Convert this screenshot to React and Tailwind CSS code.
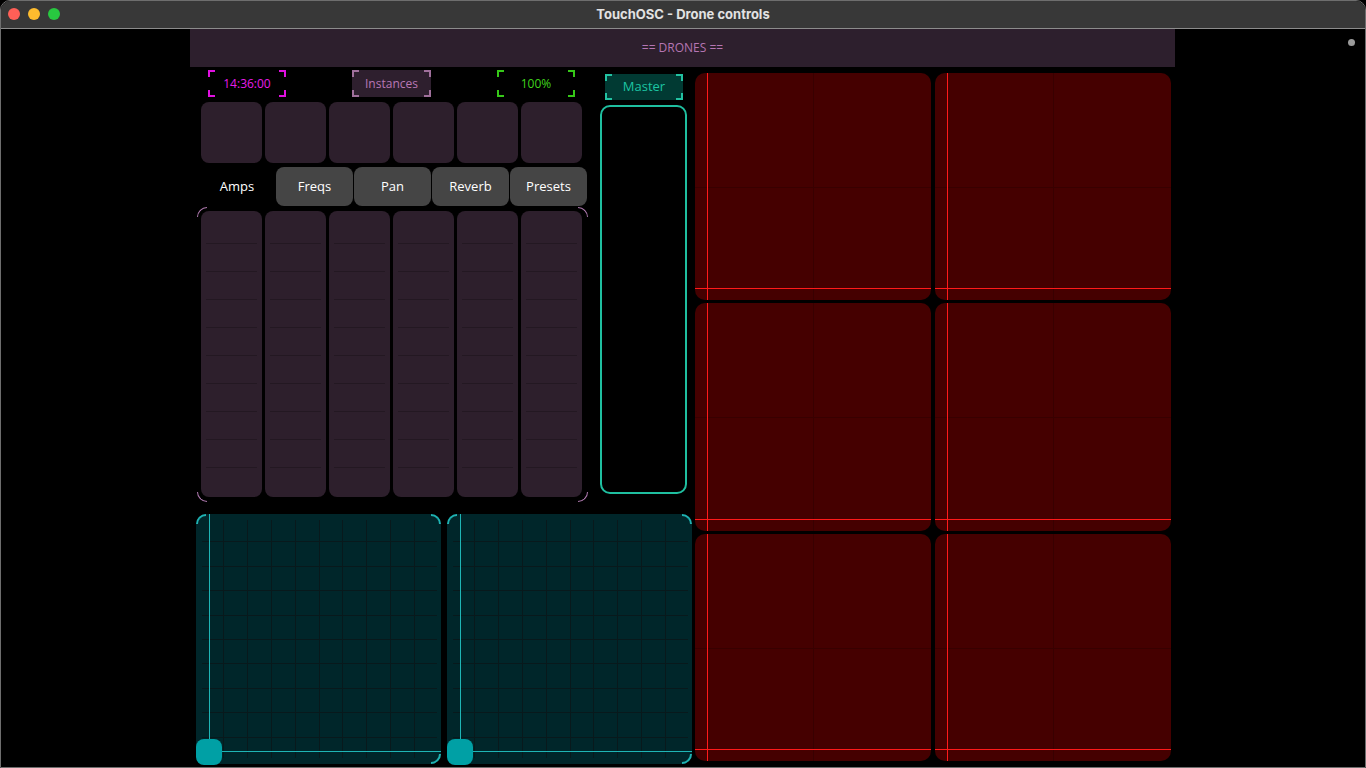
import React from 'react'

const cornerPos = [
  'left-0 top-0 border-l-2 border-t-2',
  'right-0 top-0 border-r-2 border-t-2',
  'left-0 bottom-0 border-l-2 border-b-2',
  'right-0 bottom-0 border-r-2 border-b-2',
]

function BracketBox({ width, text, textCls, lineCls, bgCls = '' }) {
  return (
    <div className={`relative h-full flex items-center justify-center ${width} ${bgCls}`}>
      {cornerPos.map((p, i) => (
        <span key={i} className={`absolute w-[7px] h-[7px] ${p} ${lineCls}`} />
      ))}
      <span className={`text-[12px] ${textCls}`}>{text}</span>
    </div>
  )
}

function Arc({ pos, cls }) {
  return <span className={`absolute w-[10px] h-[10px] ${pos} ${cls}`} />
}

function Fader() {
  const ticks = [32, 60, 88, 116, 144, 172, 200, 228, 256]
  return (
    <div className="relative w-[61px] h-full rounded-[8px] bg-[#2d1f2c]">
      {ticks.map(t => (
        <div key={t} className="absolute left-[5px] right-[5px] h-px bg-[#231822]" style={{ top: t }} />
      ))}
    </div>
  )
}

function TealPad() {
  const xs = [], ys = []
  for (let k = 1; k < 10; k++) {
    xs.push(3 + k * 23.9)
    ys.push(3 + k * 24.4)
  }
  return (
    <div className="relative w-[245px] h-[250px] rounded-[10px] bg-[#00262a]">
      <svg className="absolute inset-0" width="245" height="250">
        {xs.map(x => <line key={'x' + x} x1={Math.round(x) + 0.5} y1="6" x2={Math.round(x) + 0.5} y2="244" stroke="#08191c" strokeWidth="1" />)}
        {ys.map(y => <line key={'y' + y} x1="6" y1={Math.round(y) + 0.5} x2="241" y2={Math.round(y) + 0.5} stroke="#08191c" strokeWidth="1" />)}
      </svg>
      <Arc pos="left-0 top-0 border-l-2 border-t-2 rounded-tl-full" cls="border-[#1fb2b2]" />
      <Arc pos="right-0 top-0 border-r-2 border-t-2 rounded-tr-full" cls="border-[#1fb2b2]" />
      <Arc pos="right-0 bottom-0 border-r-2 border-b-2 rounded-br-full" cls="border-[#1fb2b2]" />
      <div className="absolute left-[13px] top-0 bottom-[14px] w-px bg-[#1fb5b5]" />
      <div className="absolute left-[20px] right-0 bottom-[12px] h-px bg-[#1fb5b5]" />
      <div className="absolute left-0 bottom-[-1px] w-[26px] h-[26px] rounded-[8px] bg-[#00a0a5]" />
    </div>
  )
}

function RedPad() {
  return (
    <div className="relative rounded-[10px] bg-[#450000] overflow-hidden">
      <div className="absolute left-1/2 top-0 bottom-0 w-px bg-[#380000]" />
      <div className="absolute top-1/2 left-0 right-0 h-px bg-[#380000]" />
      <div className="absolute left-[12px] top-0 bottom-0 w-px bg-[#ff1a1a]" />
      <div className="absolute bottom-[11px] left-0 right-0 h-px bg-[#ff1a1a]" />
    </div>
  )
}

export default function App() {
  const tabs = ['Freqs', 'Pan', 'Reverb', 'Presets']
  return (
    <div className="w-[1366px] h-[768px] bg-black overflow-hidden font-['Open_Sans',sans-serif]">
      <div className="h-full flex flex-col rounded-t-[10px] border border-[#6e6e6e] overflow-hidden bg-black">
        {/* title bar */}
        <div className="relative h-[28px] shrink-0 bg-[#383838] border-b border-[#8c8c8c] flex items-center justify-center">
          <div className="absolute left-[7px] top-[7px] flex gap-[8px]">
            <span className="w-[12px] h-[12px] rounded-full bg-[#ff5f57]" />
            <span className="w-[12px] h-[12px] rounded-full bg-[#febc2e]" />
            <span className="w-[12px] h-[12px] rounded-full bg-[#28c840]" />
          </div>
          <span className="font-['Inter',sans-serif] font-bold text-[13px] text-[#e2e2e2]">TouchOSC - Drone controls</span>
        </div>

        {/* body */}
        <div className="relative flex-1">
          <span className="absolute right-[10px] top-[10px] w-[7px] h-[7px] rounded-full bg-[#9a9a9a]" />
          <div className="ml-[189px] w-[985px]">
            <div className="h-[38px] bg-[#2d1f2d] flex items-center justify-center text-[12px] text-[#b575b3]">
              == DRONES ==
            </div>

            <div className="flex">
              {/* left area */}
              <div className="w-[505px] flex flex-col">
                <div className="flex">
                  {/* controls panel */}
                  <div className="w-[410px]">
                    <div className="mt-[3px] h-[27px] flex">
                      <div className="ml-[18px] h-full">
                        <BracketBox width="w-[78px]" text="14:36:00" textCls="text-[#e81ce8]" lineCls="border-[#e010e0]" />
                      </div>
                      <div className="ml-[66px] h-full">
                        <BracketBox width="w-[79px]" text="Instances" textCls="text-[#b877b5]" lineCls="border-[#a0709c]" bgCls="bg-[#2e1f2e]" />
                      </div>
                      <div className="ml-[66px] h-full">
                        <BracketBox width="w-[78px]" text="100%" textCls="text-[#3fd41c]" lineCls="border-[#36c818]" />
                      </div>
                    </div>

                    <div className="mt-[5px] ml-[11px] flex gap-[3px]">
                      {[0, 1, 2, 3, 4, 5].map(i => (
                        <div key={i} className="w-[61px] h-[61px] rounded-[8px] bg-[#2d1f2c]" />
                      ))}
                    </div>

                    <div className="mt-[4px] ml-[9px] h-[39px] flex gap-[1px] text-[13px] text-white">
                      <div className="w-[76px] flex items-center justify-center">Amps</div>
                      {tabs.map(t => (
                        <div key={t} className="w-[77px] rounded-[8px] bg-[#454545] flex items-center justify-center">{t}</div>
                      ))}
                    </div>

                    <div className="relative mt-[1px] ml-[7px] w-[391px] h-[295px]">
                      <Arc pos="left-0 top-0 border-l-[1.5px] border-t-[1.5px] rounded-tl-full" cls="border-[#b07ab0]" />
                      <Arc pos="right-0 top-0 border-r-[1.5px] border-t-[1.5px] rounded-tr-full" cls="border-[#b07ab0]" />
                      <Arc pos="left-0 bottom-0 border-l-[1.5px] border-b-[1.5px] rounded-bl-full" cls="border-[#b07ab0]" />
                      <Arc pos="right-0 bottom-0 border-r-[1.5px] border-b-[1.5px] rounded-br-full" cls="border-[#b07ab0]" />
                      <div className="pt-[4px] pl-[4px] flex gap-[3px] h-[290px]">
                        {[0, 1, 2, 3, 4, 5].map(i => <Fader key={i} />)}
                      </div>
                    </div>
                  </div>

                  {/* master */}
                  <div className="w-[95px]">
                    <div className="mt-[7px] ml-[5px] h-[26px]">
                      <BracketBox width="w-[78px]" text="Master" textCls="text-[#1cc4a2] text-[13px]" lineCls="border-[#22c2a2]" bgCls="bg-[#013a33]" />
                    </div>
                    <div className="mt-[5px] w-[87px] h-[389px] rounded-[10px] border-2 border-[#1fbfa0] bg-black" />
                  </div>
                </div>

                <div className="mt-[12px] ml-[6px] flex gap-[6px]">
                  <TealPad />
                  <TealPad />
                </div>
              </div>

              {/* red xy pads */}
              <div className="mt-[6px] grid grid-cols-[236px_236px] grid-rows-[227px_228px_227px] gap-x-[4px] gap-y-[3px]">
                {[0, 1, 2, 3, 4, 5].map(i => <RedPad key={i} />)}
              </div>
            </div>
          </div>
        </div>
      </div>
    </div>
  )
}
